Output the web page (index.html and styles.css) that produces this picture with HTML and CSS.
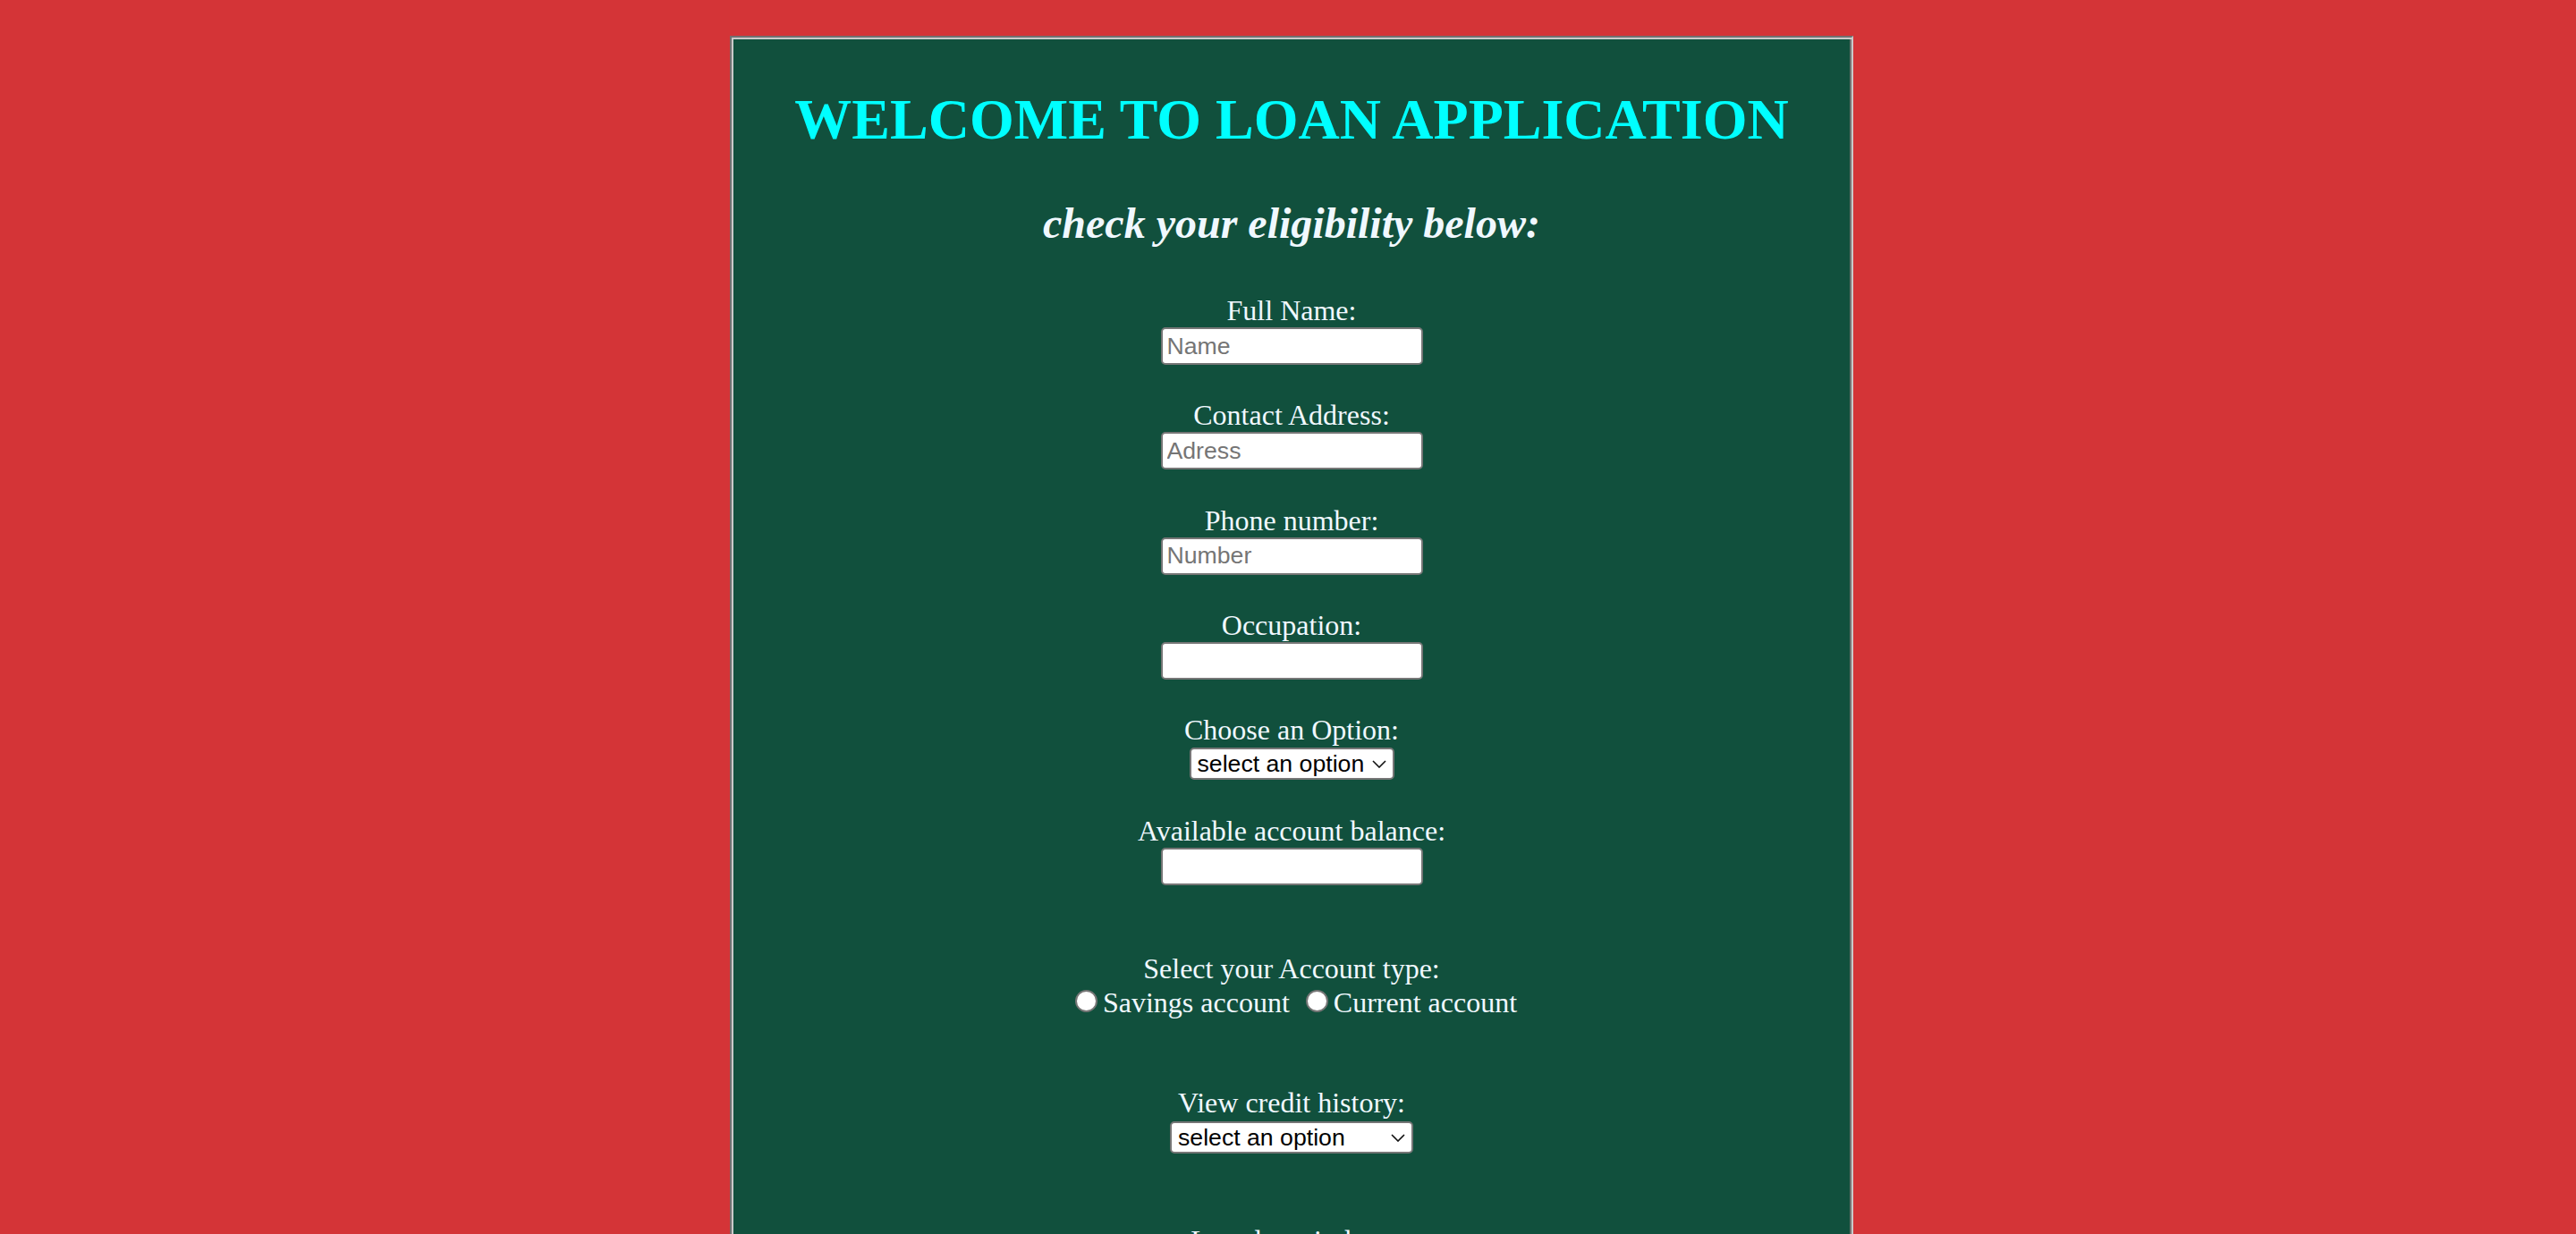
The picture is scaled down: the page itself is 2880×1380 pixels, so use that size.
FILE: index.html
```html
<!DOCTYPE html>
<html lang="en">
<head>
<meta charset="utf-8">
<title>Loan Application</title>
<link rel="stylesheet" href="styles.css">
</head>
<body>
<div class="panel">
  <h1 class="title">WELCOME TO LOAN APPLICATION</h1>
  <h2 class="subtitle">check your eligibility below:</h2>
  <form class="form">
    <div class="field">
      <label class="label" for="name">Full Name:</label>
      <input class="text-input" id="name" type="text" placeholder="Name">
    </div>
    <div class="field">
      <label class="label" for="address">Contact Address:</label>
      <input class="text-input" id="address" type="text" placeholder="Adress">
    </div>
    <div class="field">
      <label class="label" for="phone">Phone number:</label>
      <input class="text-input" id="phone" type="text" placeholder="Number">
    </div>
    <div class="field">
      <label class="label" for="occupation">Occupation:</label>
      <input class="text-input" id="occupation" type="text">
    </div>
    <div class="field field-select">
      <label class="label" for="option">Choose an Option:</label>
      <div class="select-wrap select-short">
        <select class="select" id="option">
          <option>select an option</option>
          <option>Personal loan</option>
          <option>Business loan</option>
        </select>
        <svg class="chevron" width="16" height="9" viewBox="0 0 16 9"><polyline points="1,1 8,8 15,1" fill="none" stroke="#111" stroke-width="1.6"/></svg>
      </div>
    </div>
    <div class="field field-balance">
      <label class="label" for="balance">Available account balance:</label>
      <input class="text-input" id="balance" type="text">
    </div>
    <div class="field field-account">
      <span class="label">Select your Account type:</span>
      <div class="radio-row">
        <input class="radio" type="radio" name="acct" id="savings"><label for="savings">Savings account</label> <input class="radio" type="radio" name="acct" id="current"><label for="current">Current account</label>
      </div>
    </div>
    <div class="field field-credit">
      <label class="label" for="credit">View credit history:</label>
      <div class="select-wrap select-long">
        <select class="select" id="credit">
          <option>select an option</option>
          <option>Good</option>
          <option>Bad</option>
        </select>
        <svg class="chevron" width="16" height="9" viewBox="0 0 16 9"><polyline points="1,1 8,8 15,1" fill="none" stroke="#111" stroke-width="1.6"/></svg>
      </div>
    </div>
    <div class="field">
      <label class="label" for="deposit">Last deposit date:</label>
      <input class="text-input" id="deposit" type="text">
    </div>
  </form>
</div>
</body>
</html>
```
FILE: styles.css
```css
html, body {
  margin: 0;
  padding: 0;
}

body {
  background: #d43437;
  font-family: "Liberation Serif", "Times New Roman", serif;
  color: #f0f8ff;
}

.panel {
  box-sizing: border-box;
  width: 1256px;
  margin: 40px 0 0 calc(50% - 624px);
  padding: 56px 20px 200px;
  background: #11503d;
  border: 2px solid;
  border-color: #717171 #c9c9c9 #c9c9c9 #717171;
  box-shadow: inset 2px 2px 0 #c9c9c9, inset -2px -2px 0 #717171;
  text-align: center;
}

.title {
  margin: 0;
  font-size: 64px;
  line-height: 71px;
  font-weight: bold;
  color: #00ffff;
}

.subtitle {
  margin: 54px 0 0;
  font-size: 48px;
  line-height: 53px;
  font-weight: bold;
  font-style: italic;
  color: #f0f8ff;
}

.form {
  margin-top: 53px;
}

.field {
  margin-bottom: 38.33px;
}

.field-select {
  margin-bottom: 38.7px;
}

.field-balance {
  margin-bottom: 75px;
}

.field-account {
  margin-bottom: 76px;
}

.field-credit {
  margin-bottom: 79px;
}

.label {
  display: block;
  font-size: 32px;
  line-height: 36px;
}

.text-input {
  display: block;
  box-sizing: border-box;
  width: 293px;
  height: 42px;
  margin: 1px auto 0;
  padding: 0 5px;
  border: 2px solid #767676;
  border-radius: 5px;
  background: #fff;
  font-family: "Liberation Sans", Arial, sans-serif;
  font-size: 26.67px;
  color: #000;
}

.text-input::placeholder {
  color: #757575;
}

.select-wrap {
  position: relative;
  margin: 1.5px auto 0;
  height: 36px;
}

.select-short {
  width: 229px;
}

.select-long {
  width: 272px;
  margin-top: 3px;
}

.select {
  -webkit-appearance: none;
  appearance: none;
  box-sizing: border-box;
  width: 100%;
  height: 36px;
  margin: 0;
  padding: 0 0 0 7px;
  border: 2px solid #767676;
  border-radius: 5px;
  background: #fff;
  font-family: "Liberation Sans", Arial, sans-serif;
  font-size: 26.67px;
  color: #000;
}

.chevron {
  position: absolute;
  right: 9px;
  top: 14px;
  pointer-events: none;
}

.radio-row {
  font-size: 32px;
  line-height: 36px;
}

.radio {
  -webkit-appearance: none;
  appearance: none;
  box-sizing: border-box;
  display: inline-block;
  width: 25px;
  height: 25px;
  margin: 6px 6px 0 10px;
  border: 2px solid #767676;
  border-radius: 50%;
  background: #fff;
  vertical-align: baseline;
}
```
